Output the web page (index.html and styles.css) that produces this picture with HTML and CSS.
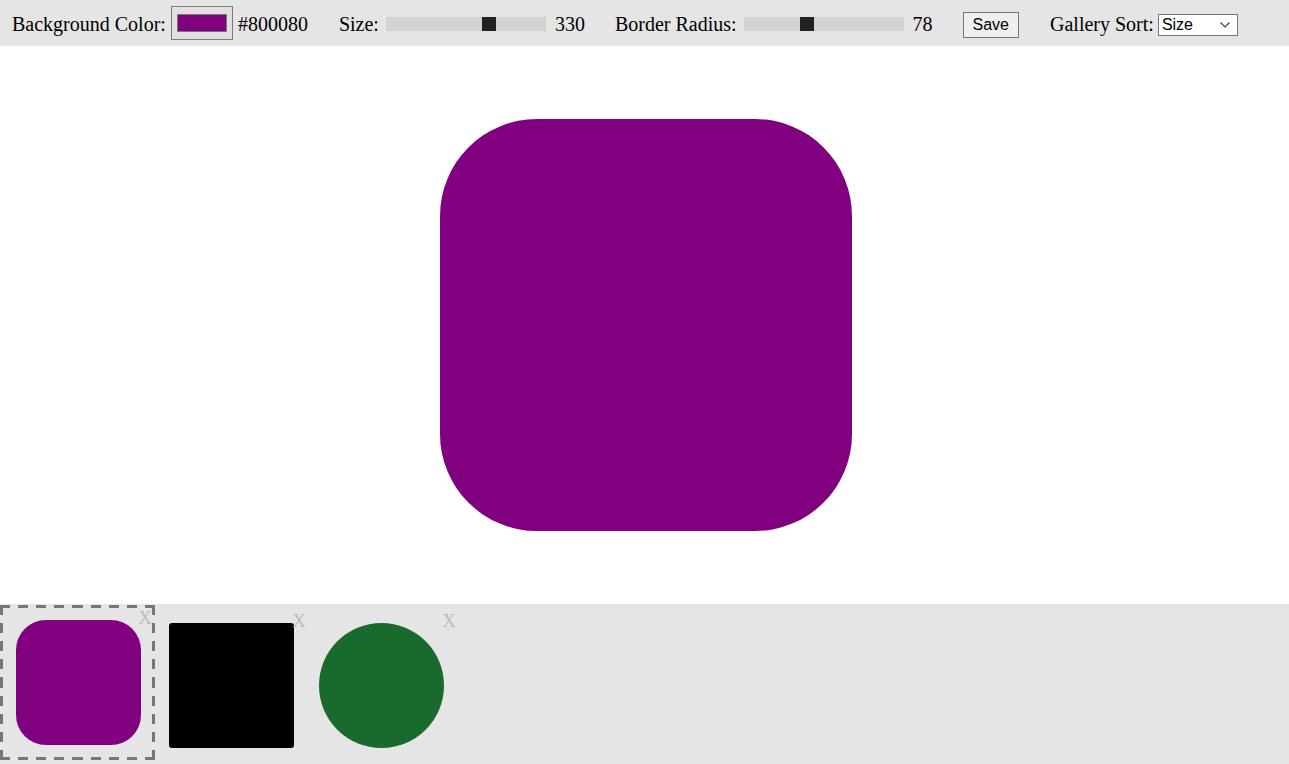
FILE: index.html
```html
<!DOCTYPE html>
<html lang="en">
<head>
<meta charset="utf-8">
<title>Shape Designer</title>
<link rel="stylesheet" href="styles.css">
</head>
<body>
<div class="app">
  <div class="toolbar">
    <div class="group group-color">
      <label class="label" for="bg">Background Color:</label>
      <input id="bg" class="color-input" type="color" value="#800080">
      <span class="value">#800080</span>
    </div>
    <div class="group">
      <label class="label" for="size">Size:</label>
      <input id="size" class="slider" type="range" min="0" max="500" value="330">
      <span class="value slider-value">330</span>
    </div>
    <div class="group">
      <label class="label" for="radius">Border Radius:</label>
      <input id="radius" class="slider" type="range" min="0" max="200" value="78">
      <span class="value slider-value">78</span>
    </div>
    <div class="group group-save">
      <button class="save-btn" type="button">Save</button>
    </div>
    <div class="group">
      <label class="label" for="sort">Gallery Sort:</label>
      <select id="sort" class="sort-select">
        <option>Size</option>
        <option>Color</option>
        <option>Radius</option>
      </select>
    </div>
  </div>

  <div class="stage">
    <div class="preview"></div>
  </div>

  <div class="gallery">
    <div class="item selected">
      <div class="thumb thumb-purple"></div>
      <span class="remove">X</span>
    </div>
    <div class="item">
      <div class="thumb thumb-black"></div>
      <span class="remove">X</span>
    </div>
    <div class="item">
      <div class="thumb thumb-green"></div>
      <span class="remove">X</span>
    </div>
  </div>
</div>
</body>
</html>
```

FILE: styles.css
```css
* { box-sizing: border-box; }

html, body {
  margin: 0;
  padding: 0;
  height: 100%;
}

body {
  font-family: "Liberation Serif", "Times New Roman", serif;
  font-size: 20px;
  color: #000;
  background: #fff;
}

.app {
  display: flex;
  flex-direction: column;
  height: 100vh;
}

.toolbar {
  flex: 0 0 46px;
  height: 46px;
  background: #e5e5e5;
  display: flex;
  align-items: center;
  gap: 30px;
  padding: 2px 0 0 12px;
}

.group {
  display: flex;
  align-items: center;
  gap: 5px;
}
.group-color { margin-right: 1px; }
.group-save { margin-right: 1px; }

.label,
.value {
  line-height: 23px;
  white-space: nowrap;
}

.color-input {
  width: 62px;
  height: 34px;
  padding: 0;
  margin: 0 0 2px 0;
  border: 1px solid #7a7a7a;
  background: #e0e0e0;
  cursor: pointer;
}
.color-input::-webkit-color-swatch-wrapper {
  padding: 7px 5px;
}
.color-input::-webkit-color-swatch {
  border: 1px solid #777;
}

.slider {
  -webkit-appearance: none;
  appearance: none;
  width: 160px;
  height: 14px;
  margin: 0 4px 0 2px;
  background: #d3d3d3;
  outline: none;
}
.slider::-webkit-slider-thumb {
  -webkit-appearance: none;
  appearance: none;
  width: 14px;
  height: 14px;
  background: #222;
  border: none;
  cursor: pointer;
}

.save-btn {
  font-family: "Liberation Sans", Arial, sans-serif;
  font-size: 16px;
  line-height: 18px;
  height: 26px;
  padding: 3px 9px;
  margin-top: 2px;
  border: 1px solid #767676;
  background: #efefef;
  color: #000;
  border-radius: 0;
}

.sort-select {
  -webkit-appearance: none;
  appearance: none;
  font-family: "Liberation Sans", Arial, sans-serif;
  font-size: 16px;
  line-height: 18px;
  width: 80px;
  height: 22px;
  margin: 2px 0 0 -1px;
  padding: 1px 20px 1px 3px;
  border: 1px solid #767676;
  background-color: #fff;
  background-image: url("data:image/svg+xml,%3Csvg xmlns='http://www.w3.org/2000/svg' width='10' height='6' viewBox='0 0 10 6'%3E%3Cpath d='M0.5 0.5 L5 5 L9.5 0.5' fill='none' stroke='%23444' stroke-width='1.2'/%3E%3C/svg%3E");
  background-repeat: no-repeat;
  background-position: right 7px center;
  background-size: 10px 6px;
  color: #000;
  border-radius: 0;
}

.stage {
  flex: 1 1 auto;
  display: flex;
  align-items: center;
  justify-content: center;
  background: #fff;
}

.preview {
  width: 412px;
  height: 412px;
  margin-left: 3px;
  border-radius: 97px;
  background: #800080;
}

.gallery {
  flex: 0 0 160px;
  height: 160px;
  background: #e5e5e5;
  display: flex;
  align-items: flex-end;
  gap: 1px;
  padding: 0 0 4px 0;
}

.item {
  position: relative;
  padding: 12px;
}
.item.selected {
  border: 3px solid transparent;
  padding: 12px 11px 12px 13px;
  margin-right: 1px;
  background-image:
    repeating-linear-gradient(90deg, #777 0 10px, transparent 10px 18.125px),
    repeating-linear-gradient(90deg, #777 0 10px, transparent 10px 18.125px),
    repeating-linear-gradient(180deg, #777 0 10px, transparent 10px 18.125px),
    repeating-linear-gradient(180deg, #777 0 10px, transparent 10px 18.125px);
  background-size: 100% 3px, 100% 3px, 3px 100%, 3px 100%;
  background-position: left top, left bottom, left top, right top;
  background-repeat: no-repeat;
  background-origin: border-box;
  background-clip: border-box;
}

.thumb {
  width: 125px;
  height: 125px;
}
.thumb-purple {
  background: #800080;
  border-radius: 30px;
}
.thumb-black {
  background: #000;
  border-radius: 3px;
}
.thumb-green {
  background: #186a2e;
  border-radius: 50%;
}

.remove {
  position: absolute;
  top: 0;
  right: 0;
  font-family: "Liberation Serif", "Times New Roman", serif;
  font-size: 19px;
  line-height: 20px;
  color: #bdbdbd;
  cursor: pointer;
}
```
